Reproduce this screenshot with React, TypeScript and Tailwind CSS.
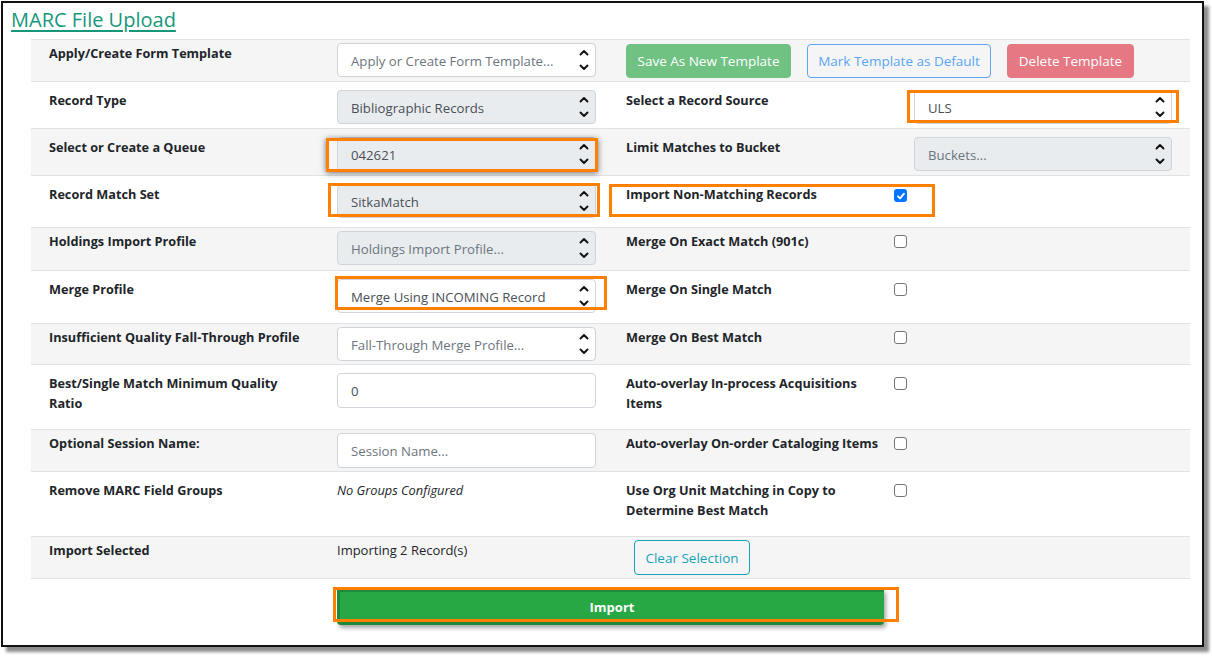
import React from "react";

const Arrows = () => (
  <svg
    className="absolute right-[6px] top-[5px]"
    width="10"
    height="22"
    viewBox="0 0 10 22"
    fill="none"
    stroke="#111"
    strokeWidth="1.9"
    strokeLinecap="round"
    strokeLinejoin="round"
  >
    <path d="M1.5 5.5 L5 2 L8.5 5.5" />
    <path d="M1.5 16.5 L5 20 L8.5 16.5" />
  </svg>
);

type SelProps = {
  text: string;
  disabled?: boolean;
  placeholder?: boolean;
};

const Select = ({ text, disabled, placeholder }: SelProps) => (
  <div
    className={`relative h-[34px] w-full rounded-[4px] border border-[#ced4da] pl-[13px] pt-px text-[13.2px] leading-[32px] ${
      disabled ? "bg-[#e9ecef]" : "bg-white"
    } ${placeholder ? "text-[#6c757d]" : "text-[#495057]"}`}
  >
    {text}
    <Arrows />
  </div>
);

const Input = ({ text, placeholder }: { text: string; placeholder?: boolean }) => (
  <div
    className={`h-[35px] w-full rounded-[4px] border border-[#ced4da] bg-white pl-[13px] pt-px text-[13.2px] leading-[33px] ${
      placeholder ? "text-[#6c757d]" : "text-[#495057]"
    }`}
  >
    {text}
  </div>
);

const Check = ({ checked }: { checked?: boolean }) =>
  checked ? (
    <div className="mt-[5px] flex h-[13px] w-[13px] items-center justify-center rounded-[3px] bg-[#0075ff]">
      <svg width="10" height="10" viewBox="0 0 10 10" fill="none" stroke="white" strokeWidth="1.8" strokeLinecap="round" strokeLinejoin="round">
        <path d="M2 5.3 L4.1 7.4 L8 2.6" />
      </svg>
    </div>
  ) : (
    <div className="mt-[4px] h-[13px] w-[13px] rounded-[3px] border border-[#767676] bg-white" />
  );

const Label = ({ children }: { children: React.ReactNode }) => (
  <div className="text-[12.7px] font-bold leading-[20px] text-[#212529]">{children}</div>
);

type Row = {
  h: number;
  pad: number;
  label: React.ReactNode;
  control: React.ReactNode;
  right?: React.ReactNode;
};

const RightCheck = ({ label, checked }: { label: React.ReactNode; checked?: boolean }) => (
  <div className="flex">
    <div className="w-[268px] pr-[6px]">
      <Label>{label}</Label>
    </div>
    <Check checked={checked} />
  </div>
);

const RightSelect = ({ label, sel }: { label: string; sel: React.ReactNode }) => (
  <div className="flex">
    <div className="w-[288px]">
      <Label>{label}</Label>
    </div>
    <div className="w-[258px]">{sel}</div>
  </div>
);

export default function App() {
  const rows: Row[] = [
    {
      h: 42,
      pad: 3,
      label: "Apply/Create Form Template",
      control: <Select text="Apply or Create Form Template..." placeholder />,
      right: (
        <div className="flex gap-4 pt-px text-[13.5px] leading-[32px] text-white">
          <div className="h-[34px] w-[165px] rounded-[4px] border border-[#70c283] bg-[#70c283] text-center">Save As New Template</div>
          <div className="h-[34px] w-[184px] rounded-[4px] border border-[#5aa5f7] bg-[#f5f5f5] text-center text-[#5aa5f7]">Mark Template as Default</div>
          <div className="h-[34px] w-[127px] rounded-[4px] border border-[#e57883] bg-[#e57883] text-center">Delete Template</div>
        </div>
      ),
    },
    {
      h: 47,
      pad: 8,
      label: "Record Type",
      control: <Select text="Bibliographic Records" disabled />,
      right: <RightSelect label="Select a Record Source" sel={<Select text="ULS" />} />,
    },
    {
      h: 47,
      pad: 8,
      label: "Select or Create a Queue",
      control: <Select text="042621" disabled />,
      right: <RightSelect label="Limit Matches to Bucket" sel={<Select text="Buckets..." disabled placeholder />} />,
    },
    {
      h: 52,
      pad: 8,
      label: "Record Match Set",
      control: <Select text="SitkaMatch" disabled />,
      right: <RightCheck label="Import Non-Matching Records" checked />,
    },
    {
      h: 43,
      pad: 3,
      label: "Holdings Import Profile",
      control: <Select text="Holdings Import Profile..." disabled placeholder />,
      right: <RightCheck label="Merge On Exact Match (901c)" />,
    },
    {
      h: 53,
      pad: 8,
      label: "Merge Profile",
      control: <Select text="Merge Using INCOMING Record" />,
      right: <RightCheck label="Merge On Single Match" />,
    },
    {
      h: 41,
      pad: 3,
      label: "Insufficient Quality Fall-Through Profile",
      control: <Select text="Fall-Through Merge Profile..." placeholder />,
      right: <RightCheck label="Merge On Best Match" />,
    },
    {
      h: 65,
      pad: 8,
      label: (
        <>
          Best/Single Match Minimum Quality
          <br />
          Ratio
        </>
      ),
      control: <Input text="0" />,
      right: (
        <RightCheck
          label={
            <>
              Auto-overlay In-process Acquisitions
              <br />
              Items
            </>
          }
        />
      ),
    },
    {
      h: 42,
      pad: 3,
      label: "Optional Session Name:",
      control: <Input text="Session Name..." placeholder />,
      right: <RightCheck label="Auto-overlay On-order Cataloging Items" />,
    },
    {
      h: 65,
      pad: 8,
      label: "Remove MARC Field Groups",
      control: <div className="text-[12.8px] italic leading-[20px] text-[#212529]">No Groups Configured</div>,
      right: (
        <RightCheck
          label={
            <>
              Use Org Unit Matching in Copy to
              <br />
              Determine Best Match
            </>
          }
        />
      ),
    },
    {
      h: 42,
      pad: 3,
      label: "Import Selected",
      control: <div className="text-[13px] leading-[20px] text-[#212529]">Importing 2 Record(s)</div>,
      right: (
        <div className="pl-[8px]">
          <div className="h-[35px] w-[116px] rounded-[4px] border border-[#17a2b8] pt-px text-center text-[13.5px] leading-[33px] text-[#17a2b8]">
            Clear Selection
          </div>
        </div>
      ),
    },
  ];

  return (
    <div className="relative h-[656px] w-[1212px] overflow-hidden bg-white pl-px pt-px font-['Open_Sans',sans-serif]">
      <div className="h-[646px] w-[1203px] border-2 border-[#111] bg-white shadow-[5px_5px_3px_rgba(0,0,0,0.45)]">
        <div className="ml-[8px] mt-[3px] text-[20px] leading-[28px] text-[#17977a] underline decoration-2 underline-offset-[3px]">
          MARC File Upload
        </div>
        <div className="ml-[28px] mt-[5px] w-[1159px] border-t border-[#dee2e6]">
          {rows.map((r, i) => (
            <div
              key={i}
              className={`flex border-b border-[#dee2e6] ${i % 2 === 0 ? "bg-[#f5f5f5]" : "bg-white"}`}
              style={{ height: r.h, paddingTop: r.pad }}
            >
              <div className="w-[306px] pl-[18px]">
                <Label>{r.label}</Label>
              </div>
              <div className="w-[259px]">{r.control}</div>
              <div className="w-[30px]" />
              <div className="flex-1">{r.right}</div>
            </div>
          ))}
        </div>
        <div className="ml-[334px] mt-[10px] flex">
          <div className="h-[36px] w-[547px] rounded-b-[4px] border-[3px] border-r-0 border-[#1f8a3a] bg-[#28a745] pt-px text-center text-[13px] font-bold leading-[28px] text-white shadow-[2px_3px_4px_rgba(0,0,0,0.35)]">
            Import
          </div>
        </div>
      </div>

      {/* orange annotation boxes */}
      <div className="absolute left-[907px] top-[90px] h-[33px] w-[272px] border-[3px] border-[#ff8000]" />
      <div className="absolute left-[326px] top-[138px] h-[34px] w-[272px] border-[3px] border-[#ff8000] shadow-[0_1px_6px_rgba(0,0,0,0.55)]" />
      <div className="absolute left-[328px] top-[183px] h-[34px] w-[272px] border-[3px] border-[#ff8000]" />
      <div className="absolute left-[609px] top-[184px] h-[33px] w-[326px] border-[3px] border-[#ff8000]" />
      <div className="absolute left-[335px] top-[276px] h-[34px] w-[272px] border-[3px] border-[#ff8000]" />
      <div className="absolute left-[333px] top-[587px] h-[35px] w-[566px] border-[3px] border-[#ff8000]" />
    </div>
  );
}
